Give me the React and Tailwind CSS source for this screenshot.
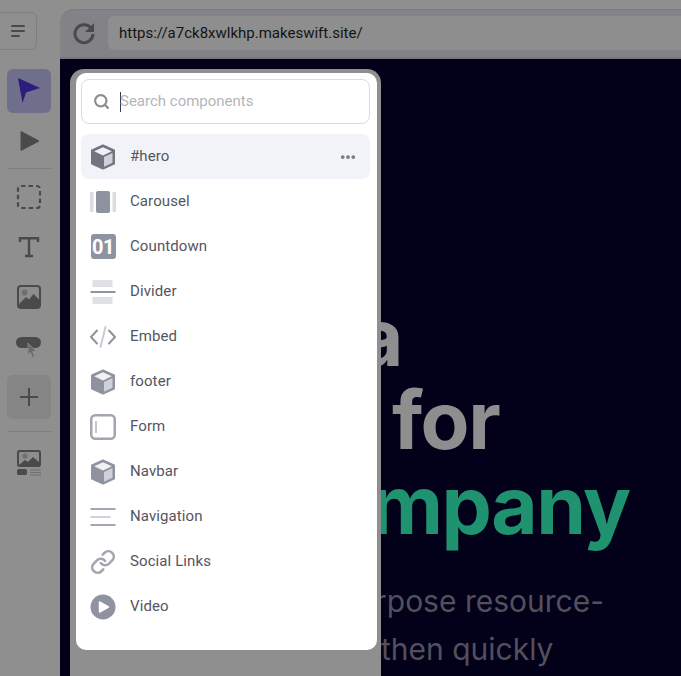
import React from "react";
import { Link, Search, MoreHorizontal } from "lucide-react";

const Cube = ({ dark }) => (
  <svg width="26" height="26" viewBox="0 0 26 26">
    <path d="M13 1.5 24 6.5V19.5L13 24.5 2 19.5V6.5Z" fill={dark ? "#71757f" : "#8f93a0"} stroke={dark ? "#71757f" : "#8f93a0"} strokeWidth="2" strokeLinejoin="round" />
    <path d="M13 3.2 21.8 7.2 13 11.4 4.2 7.2Z" fill="#f1f1f4" />
    <path d="M14 13 22.5 9V18.8L14 22.8Z" fill="#cfd1d8" />
  </svg>
);

const CarouselIcon = () => (
  <svg width="26" height="26" viewBox="0 0 26 26">
    <rect x="0" y="3" width="3.5" height="20" fill="#dcdde2" />
    <rect x="22.5" y="3" width="3.5" height="20" fill="#dcdde2" />
    <rect x="6" y="2" width="14" height="22" rx="2" fill="#8f93a0" />
  </svg>
);

const CountdownIcon = () => (
  <div className="w-[25px] h-[25px] rounded-[3px] bg-[#8f93a0] flex items-center justify-center text-white font-bold text-[20px] tracking-[-0.5px] leading-none">
    01
  </div>
);

const DividerIcon = () => (
  <svg width="26" height="26" viewBox="0 0 26 26">
    <rect x="2.5" y="1" width="20" height="7" fill="#dfe0e5" />
    <rect x="0.5" y="12" width="25" height="2" fill="#8f93a0" />
    <rect x="2.5" y="18" width="20" height="7" fill="#dfe0e5" />
  </svg>
);

const EmbedIcon = () => (
  <svg width="26" height="26" viewBox="0 0 26 26" fill="none" strokeWidth="2" strokeLinecap="round">
    <path d="M7 6.5 1 13 7 19.5M19 6.5 25 13 19 19.5" stroke="#8f93a0" strokeLinejoin="round" />
    <path d="M15.5 3 10.5 23" stroke="#c9cbd2" />
  </svg>
);

const FormIcon = () => (
  <svg width="26" height="26" viewBox="0 0 26 26" fill="none">
    <rect x="1.25" y="1.25" width="23.5" height="23.5" rx="4" stroke="#a3a6b1" strokeWidth="2.5" />
    <path d="M6 7V19" stroke="#c4c6ce" strokeWidth="2" />
  </svg>
);

const NavigationIcon = () => (
  <svg width="26" height="26" viewBox="0 0 26 26">
    <rect x="0.5" y="4" width="25" height="2" fill="#a3a6b1" />
    <rect x="0.5" y="12" width="20" height="2" fill="#d0d2d8" />
    <rect x="0.5" y="20" width="25" height="2" fill="#a3a6b1" />
  </svg>
);

const VideoIcon = () => (
  <svg width="26" height="26" viewBox="0 0 26 26">
    <circle cx="13" cy="13" r="12.5" fill="#8f93a0" />
    <path d="M9.5 8 18.5 13 9.5 18Z" fill="#fff" stroke="#fff" strokeWidth="1.5" strokeLinejoin="round" />
  </svg>
);

const components = [
  { name: "#hero", icon: <Cube dark />, active: true },
  { name: "Carousel", icon: <CarouselIcon /> },
  { name: "Countdown", icon: <CountdownIcon /> },
  { name: "Divider", icon: <DividerIcon /> },
  { name: "Embed", icon: <EmbedIcon /> },
  { name: "footer", icon: <Cube /> },
  { name: "Form", icon: <FormIcon /> },
  { name: "Navbar", icon: <Cube /> },
  { name: "Navigation", icon: <NavigationIcon /> },
  { name: "Social Links", icon: <Link size={26} color="#a3a6b1" strokeWidth={2.4} /> },
  { name: "Video", icon: <VideoIcon /> },
];

const Sidebar = () => (
  <div className="w-[60px] shrink-0 flex flex-col items-center">
    <div className="self-start -ml-[5px] mt-3 w-[42px] h-[38px] border border-[#7f7f7f] rounded-md flex items-center justify-center pl-[4px]">
      <svg width="16" height="14" viewBox="0 0 16 14">
        <rect x="1" y="1" width="14" height="2" rx="1" fill="#4a4a4a" />
        <rect x="1" y="6" width="14" height="2" rx="1" fill="#4a4a4a" />
        <rect x="1" y="11" width="9" height="2" rx="1" fill="#4a4a4a" />
      </svg>
    </div>

    <div className="mt-[19px] -ml-[2px] w-11 h-11 rounded-md bg-[#6f6e8b] flex items-center justify-center">
      <svg width="26" height="28" viewBox="0 0 26 28">
        <path d="M2 1 24 11 10 15.5 6.5 26Z" fill="#2a1d7d" />
      </svg>
    </div>
    <div className="h-11 mt-[6px] flex items-center">
      <svg width="22" height="22" viewBox="0 0 22 22">
        <path d="M2 1.5 20 11 2 20.5Z" fill="#4a4a4a" stroke="#4a4a4a" strokeLinejoin="round" />
      </svg>
    </div>
    <div className="w-11 -ml-[2px] h-px bg-[#7f7f7f] mt-[5px]" />
    <div className="h-[26px] mt-[15px] flex items-center -ml-[2px]">
      <svg width="26" height="26" viewBox="0 0 26 26" fill="none">
        <rect x="2" y="2" width="22" height="22" rx="3" stroke="#4a4a4a" strokeWidth="2.2" strokeDasharray="4.5 3" />
      </svg>
    </div>
    <div className="h-[26px] mt-[24px] flex items-center -ml-[2px]">
      <svg width="22" height="22" viewBox="0 0 22 22" fill="none" stroke="#4a4a4a" strokeWidth="2.4">
        <path d="M2 6V2.2H20V6M11 2.2V20M7 20H15" />
      </svg>
    </div>
    <div className="h-[26px] mt-[24px] flex items-center -ml-[2px]">
      <svg width="26" height="26" viewBox="0 0 26 26">
        <rect x="1" y="1" width="24" height="24" rx="4" fill="#4a4a4a" />
        <rect x="3" y="3" width="20" height="20" rx="2" fill="#8d8d8d" />
        <circle cx="8.5" cy="8.5" r="3" fill="#6f6f6f" />
        <path d="M3 20 10 13 13 15.5 17.5 10 23 15.5V23H3Z" fill="#4a4a4a" />
      </svg>
    </div>
    <div className="relative h-[22px] mt-[25px] -ml-[2px] w-[26px]">
      <div className="w-[25px] h-[11px] mt-[2px] rounded-full bg-[#4a4a4a]" />
      <svg className="absolute left-[10px] top-[7px]" width="12" height="16" viewBox="0 0 12 16">
        <path d="M2 1 10.5 9.5H6.5L8.5 14.5 6.5 15.5 4.5 10.5 2 12.5Z" fill="#6b6b6b" stroke="#8d8d8d" strokeWidth="0.8" />
      </svg>
    </div>
    <div className="mt-[18px] -ml-[2px] w-11 h-11 rounded-md bg-[#858585] flex items-center justify-center">
      <svg width="22" height="22" viewBox="0 0 22 22">
        <path d="M11 2V20M2 11H20" stroke="#4a4a4a" strokeWidth="2" />
      </svg>
    </div>
    <div className="w-11 -ml-[2px] h-px bg-[#7f7f7f] mt-[12px]" />
    <div className="mt-[18px] -ml-[2px]">
      <svg width="26" height="26" viewBox="0 0 26 26">
        <rect x="1" y="0" width="24" height="17" rx="2.5" fill="#4a4a4a" />
        <rect x="3" y="2" width="20" height="13" rx="1" fill="#8d8d8d" />
        <circle cx="9" cy="6" r="2.5" fill="#6f6f6f" />
        <path d="M3 15 9 10 12 12 17 7 23 12V15Z" fill="#4a4a4a" />
        <rect x="1" y="19" width="10" height="6" rx="1.5" fill="#4a4a4a" />
        <path d="M14 20H25M14 22.5H25M14 25H25" stroke="#6f6f6f" strokeWidth="1" />
      </svg>
    </div>
  </div>
);

const ComponentsPanel = () => (
  <div className="absolute left-[10px] top-[10px] bottom-0 w-[311px] bg-[#8f8f8f] rounded-t-[14px] pl-[6px] pr-1 pt-1">
    <div className="h-[577px] bg-white rounded-[10px] pl-[5px] pr-[7px] pt-[6px]">
      <div className="h-[45px] border border-[#dcdcdf] rounded-lg flex items-center pl-[11px] mb-[10px]">
        <Search size={17} color="#8b8b90" strokeWidth={3} />
        <div className="w-px h-5 bg-[#3c3c48] ml-[10px]" />
        <span className="text-[15px] text-[#b5b5ba] -ml-px">Search components</span>
      </div>
      {components.map((item) => (
        <div
          key={item.name}
          className={`h-[45px] flex items-center pl-[9px] pr-[13px] rounded-lg ${item.active ? "bg-[#f2f3f8]" : ""}`}
        >
          <div className="w-[26px] h-[26px] flex items-center justify-center shrink-0">{item.icon}</div>
          <span className="ml-[14px] text-[15px] text-[#54565f] tracking-[0.1px]">{item.name}</span>
          {item.active && <MoreHorizontal size={18} color="#71757f" strokeWidth={3} className="ml-auto" />}
        </div>
      ))}
    </div>
  </div>
);

const App = () => {
  return (
    <div className="w-[681px] h-[676px] overflow-hidden flex bg-[#8f8f8f] font-['Roboto',sans-serif]">
      <Sidebar />
      <div className="flex-1 min-w-0 flex flex-col pt-[9px]">
        <div className="h-[50px] shrink-0 bg-[#838387] border-t border-[#7b7b7f] border-b-2 border-b-[#77777b] rounded-tl-[14px] flex items-center pl-3 pb-[1px]">
          <svg width="24" height="24" viewBox="0 0 24 24" fill="none">
            <path d="M18.5 6.5A9 9 0 1 0 21 13" stroke="#4a4a4a" strokeWidth="3" />
            <path d="M22 2V11H13Z" fill="#4a4a4a" />
          </svg>
          <div className="ml-[12px] flex-1 h-[34px] bg-[#8e8e8e] rounded-l-md flex items-center pl-[11px] text-[15px] text-[#141414]">
            https://a7ck8xwlkhp.makeswift.site/
          </div>
        </div>
        <div className="relative flex-1 bg-[#03001a] overflow-hidden">
          <div className="pt-[237px] font-['Inter',sans-serif]">
            <div className="text-[80px] leading-[82.5px] font-bold tracking-[-1.5px] text-[#8e8e8e] whitespace-nowrap">
              <div className="ml-[297px]">a</div>
              <div className="ml-[332px]">for</div>
              <div className="ml-[310px] mt-[3px] text-[#1f9270]">mpany</div>
            </div>
            <div className="mt-[30px] text-[30px] leading-[48px] text-[#52505c] whitespace-nowrap">
              <div className="ml-[315px]">rpose resource-</div>
              <div className="ml-[321px]">then quickly</div>
            </div>
          </div>
          <ComponentsPanel />
        </div>
      </div>
    </div>
  );
};

export default App;
